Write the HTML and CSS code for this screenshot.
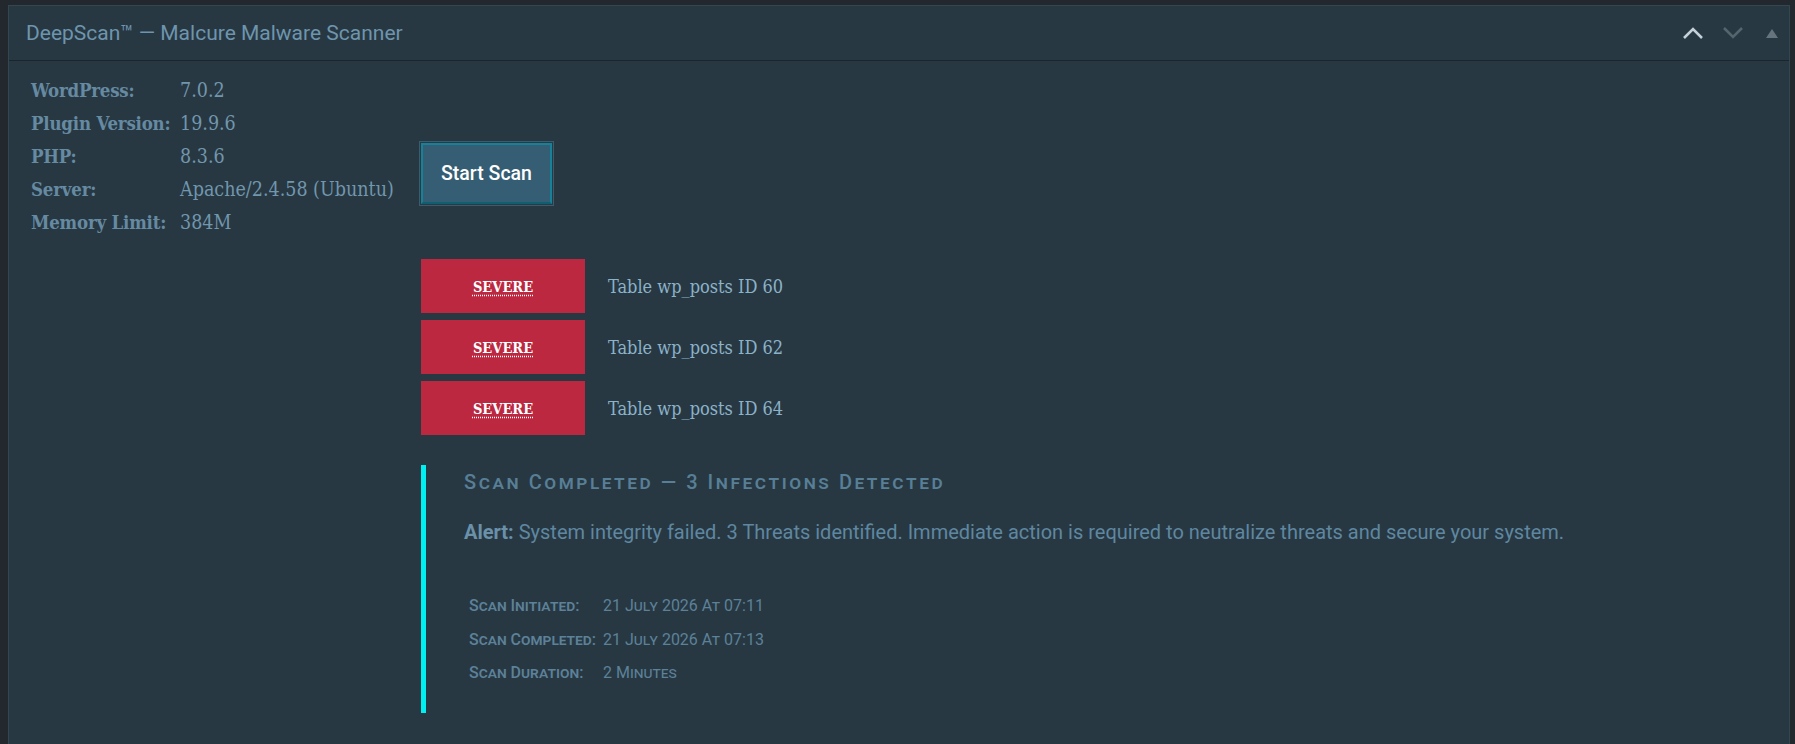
FILE: index.html
```html
<!DOCTYPE html>
<html lang="en">
<head>
<meta charset="utf-8">
<title>DeepScan — Malcure Malware Scanner</title>
<link rel="stylesheet" href="styles.css">
</head>
<body>
<div class="wrap">
  <section class="panel">
    <header class="panel-head">
      <h2 class="panel-title">DeepScan™ — Malcure Malware Scanner</h2>
      <div class="panel-actions">
        <button class="icon-btn icon-up" aria-label="Move up">
          <svg width="22" height="12" viewBox="0 0 22 12"><path d="M2 11 L11 2 L20 11" fill="none" stroke="currentColor" stroke-width="2.6"/></svg>
        </button>
        <button class="icon-btn icon-down" aria-label="Move down">
          <svg width="22" height="12" viewBox="0 0 22 12"><path d="M2 1 L11 10 L20 1" fill="none" stroke="currentColor" stroke-width="2.6"/></svg>
        </button>
        <button class="icon-btn icon-toggle" aria-label="Toggle panel">
          <svg width="12" height="9" viewBox="0 0 12 9"><path d="M6 0 L12 9 L0 9 Z" fill="currentColor"/></svg>
        </button>
      </div>
    </header>

    <div class="panel-body">
      <dl class="sysinfo">
        <div class="sysrow"><dt>WordPress:</dt><dd>7.0.2</dd></div>
        <div class="sysrow"><dt>Plugin Version:</dt><dd>19.9.6</dd></div>
        <div class="sysrow"><dt>PHP:</dt><dd>8.3.6</dd></div>
        <div class="sysrow"><dt>Server:</dt><dd>Apache/2.4.58 (Ubuntu)</dd></div>
        <div class="sysrow"><dt>Memory Limit:</dt><dd>384M</dd></div>
      </dl>

      <div class="scan-col">
        <button class="scan-btn">Start Scan</button>

        <ul class="results">
          <li class="result"><abbr class="badge" title="Severe threat">SEVERE</abbr><span class="result-loc">Table wp_posts ID 60</span></li>
          <li class="result"><abbr class="badge" title="Severe threat">SEVERE</abbr><span class="result-loc">Table wp_posts ID 62</span></li>
          <li class="result"><abbr class="badge" title="Severe threat">SEVERE</abbr><span class="result-loc">Table wp_posts ID 64</span></li>
        </ul>

        <div class="summary">
          <h3 class="summary-title">Scan Completed — 3 Infections Detected</h3>
          <p class="summary-alert"><strong>Alert:</strong> System integrity failed. 3 Threats identified. Immediate action is required to neutralize threats and secure your system.</p>
          <dl class="summary-meta">
            <div class="meta-row"><dt>Scan Initiated:</dt><dd>21 July 2026 At 07:11</dd></div>
            <div class="meta-row"><dt>Scan Completed:</dt><dd>21 July 2026 At 07:13</dd></div>
            <div class="meta-row"><dt>Scan Duration:</dt><dd>2 Minutes</dd></div>
          </dl>
        </div>
      </div>
    </div>
  </section>
</div>
</body>
</html>
```

FILE: styles.css
```css
* { box-sizing: border-box; }

html, body {
  margin: 0;
  height: 100%;
}

body {
  background: #22282e;
  font-family: Roboto, "Liberation Sans", sans-serif;
  overflow: hidden;
}

.wrap {
  padding: 5px 5px 0 8px;
  height: 100%;
}

.panel {
  background: #273843;
  border: 1px solid #34464f;
  border-bottom: 0;
  height: 100%;
}

/* header bar */
.panel-head {
  height: 55px;
  border-bottom: 1px solid #1a252c;
  display: flex;
  align-items: center;
  justify-content: space-between;
  padding: 0 11px 0 17px;
}

.panel-title {
  margin: 0;
  font-size: 21px;
  font-weight: 400;
  color: #6e95ad;
}

.panel-actions {
  display: flex;
  align-items: center;
  gap: 18px;
}

.icon-btn {
  background: none;
  border: 0;
  padding: 0;
  display: flex;
  align-items: center;
  cursor: pointer;
}

.icon-up { color: #c4d1d8; }
.icon-down { color: #55646d; }
.icon-toggle { color: #66747d; margin-left: 4px; }

/* body */
.panel-body {
  display: grid;
  grid-template-columns: 390px 1fr;
  padding: 13px 0 0 22px;
}

.sysinfo {
  margin: 0;
  font-family: "Roboto Slab", "DejaVu Serif Condensed", "DejaVu Serif", serif;
  font-size: 18.5px;
  color: #6c90a7;
}

.sysrow {
  display: flex;
  line-height: 33px;
}

.sysrow dt {
  width: 149px;
  font-weight: 700;
  color: #668aa1;
  letter-spacing: -0.2px;
  white-space: nowrap;
}

.sysrow dd {
  margin: 0;
  color: #7296ac;
  font-size: 19.5px;
}

.scan-col {
  display: flex;
  flex-direction: column;
  align-items: flex-start;
}

.scan-btn {
  margin-top: 69px;
  width: 131px;
  height: 61px;
  background: #355e74;
  border: 2px solid #16829a;
  border-bottom-color: #0f5f70;
  box-shadow: 0 0 0 1px #283a45, 0 0 0 2px #3b5c6d;
  color: #ffffff;
  font-family: Roboto, "Liberation Sans", sans-serif;
  font-size: 19.5px;
  font-weight: 500;
  cursor: pointer;
}

.results {
  list-style: none;
  margin: 55px 0 0;
  padding: 0;
  display: flex;
  flex-direction: column;
  gap: 7px;
}

.result {
  display: flex;
  align-items: center;
  gap: 23px;
}

.badge {
  width: 164px;
  height: 54px;
  background: #bc2840;
  color: #ffffff;
  display: flex;
  align-items: center;
  justify-content: center;
  font-family: "Roboto Slab", "DejaVu Serif Condensed", "DejaVu Serif", serif;
  font-weight: 700;
  font-size: 14.5px;
  text-decoration: underline dotted;
  text-underline-offset: 3px;
  cursor: help;
}

.result-loc {
  font-family: "Roboto Slab", "DejaVu Serif Condensed", "DejaVu Serif", serif;
  font-size: 18px;
  color: #8cb2c8;
}

/* scan summary */
.summary {
  margin-top: 30px;
  border-left: 5px solid #00f0f2;
  padding: 4px 0 23px 38px;
  align-self: stretch;
}

.summary-title {
  margin: 0;
  line-height: 26px;
  font-family: Roboto, "Liberation Sans", sans-serif;
  font-variant: small-caps;
  font-size: 20px;
  font-weight: 500;
  letter-spacing: 2.55px;
  color: #587f96;
}

.summary-alert {
  margin: 24px 0 0;
  line-height: 26px;
  font-family: Roboto, "Liberation Sans", sans-serif;
  font-size: 20px;
  color: #5f87a0;
}

.summary-alert strong {
  font-weight: 700;
  color: #6a91a9;
}

.summary-meta {
  margin: 44px 0 0 5px;
  font-size: 16px;
  font-variant: small-caps;
  color: #5d8198;
}

.meta-row {
  display: flex;
  line-height: 33.5px;
}

.meta-row dt {
  width: 134px;
  font-weight: 500;
  white-space: nowrap;
}

.meta-row dd {
  margin: 0;
}
```
